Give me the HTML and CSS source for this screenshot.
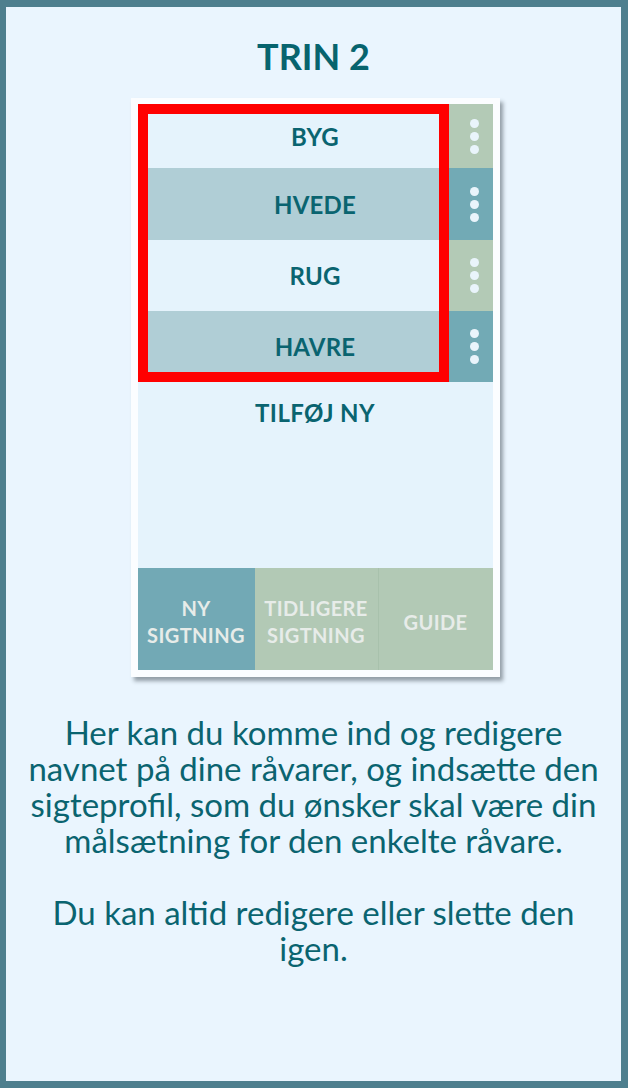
FILE: index.html
```html
<!DOCTYPE html>
<html lang="da">
<head>
<meta charset="utf-8">
<title>Trin 2</title>
<link rel="stylesheet" href="styles.css">
</head>
<body>
<div class="page">
  <h1 class="title">TRIN 2</h1>
  <div class="card">
    <div class="screen">
      <div class="list">
        <div class="row row-light row-first"><span class="label">BYG</span><span class="more more-green"><i></i><i></i><i></i></span></div>
        <div class="row row-dark"><span class="label">HVEDE</span><span class="more more-teal"><i></i><i></i><i></i></span></div>
        <div class="row row-light"><span class="label">RUG</span><span class="more more-green"><i></i><i></i><i></i></span></div>
        <div class="row row-dark"><span class="label">HAVRE</span><span class="more more-teal"><i></i><i></i><i></i></span></div>
        <div class="highlight"></div>
      </div>
      <div class="add">TILFØJ NY</div>
      <div class="tabs">
        <div class="tab tab-active">NY<br>SIGTNING</div>
        <div class="tab">TIDLIGERE<br>SIGTNING</div>
        <div class="tab tab-last">GUIDE</div>
      </div>
    </div>
  </div>
  <p class="text">Her kan du komme ind og redigere<br>navnet på dine råvarer, og indsætte den<br>sigteprofil, som du ønsker skal være din<br>målsætning for den enkelte råvare.</p>
  <p class="text">Du kan altid redigere eller slette den<br>igen.</p>
</div>
</body>
</html>
```

FILE: styles.css
```css
* { box-sizing: border-box; }
html, body { margin: 0; padding: 0; }
body { background: #4e7f8e; }
.page {
  width: 628px;
  height: 1088px;
  border-style: solid;
  border-color: #4e7f8e;
  border-width: 7px 7px 7px 6px;
  background: #eaf5fe;
  display: flex;
  flex-direction: column;
  align-items: center;
  font-family: Lato, "Open Sans", sans-serif;
  color: #0a6470;
}
.title {
  margin: 28px 0 0 0;
  font-size: 36px;
  line-height: 1.2;
  font-weight: 700;
  color: #07646e;
}
.card {
  margin-top: 20px;
  margin-left: 3px;
  width: 369px;
  padding: 6px 7px 7px 7px;
  background: #fbfdff;
  box-shadow: 3px 4px 4px rgba(40, 50, 60, 0.45);
}
.screen {
  display: flex;
  flex-direction: column;
  background: #e5f3fc;
}
.list {
  position: relative;
  display: flex;
  flex-direction: column;
}
.row {
  display: flex;
  height: 71px;
}
.row-first { height: 64px; }
.list .row:nth-child(2) { height: 72px; }
.row-light { background: #e5f3fc; }
.row-dark { background: #b0ced6; }
.label {
  flex: 1;
  display: flex;
  align-items: center;
  justify-content: center;
  padding-left: 44px;
  font-size: 24px;
  font-weight: 700;
  letter-spacing: 0.2px;
  color: #0a6470;
}
.more {
  width: 44px;
  display: flex;
  flex-direction: column;
  align-items: center;
  justify-content: center;
  gap: 4px;
  padding-left: 8px;
}
.more i {
  display: block;
  width: 9px;
  height: 9px;
  border-radius: 50%;
  background: #e9f4fb;
}
.more-green { background: #b3cab6; }
.more-teal { background: #72aab5; }
.highlight {
  position: absolute;
  left: 0;
  top: 0;
  width: 311px;
  height: 278px;
  border: 10px solid #ff0000;
}
.add {
  height: 186px;
  padding-top: 17px;
  text-align: center;
  font-size: 24px;
  line-height: 1.2;
  font-weight: 700;
  letter-spacing: 0.4px;
  color: #0a6470;
}
.tabs {
  display: grid;
  grid-template-columns: 117px 123px 1fr;
  height: 102px;
}
.tab {
  display: flex;
  align-items: center;
  justify-content: center;
  text-align: center;
  padding-top: 6px;
  background: #b2c9b5;
  color: #e7ece9;
  font-size: 20px;
  line-height: 27px;
  font-weight: 700;
  letter-spacing: 0.4px;
}
.tab-active { background: #72a9b5; }
.tab-last { border-left: 1px solid #a8c1ac; }
.text {
  margin: 0;
  text-align: center;
  font-size: 33px;
  line-height: 36px;
  letter-spacing: 0;
  white-space: nowrap;
  color: #0a6470;
}
.card + .text { margin-top: 37px; }
.text + .text { margin-top: 36px; }
```
